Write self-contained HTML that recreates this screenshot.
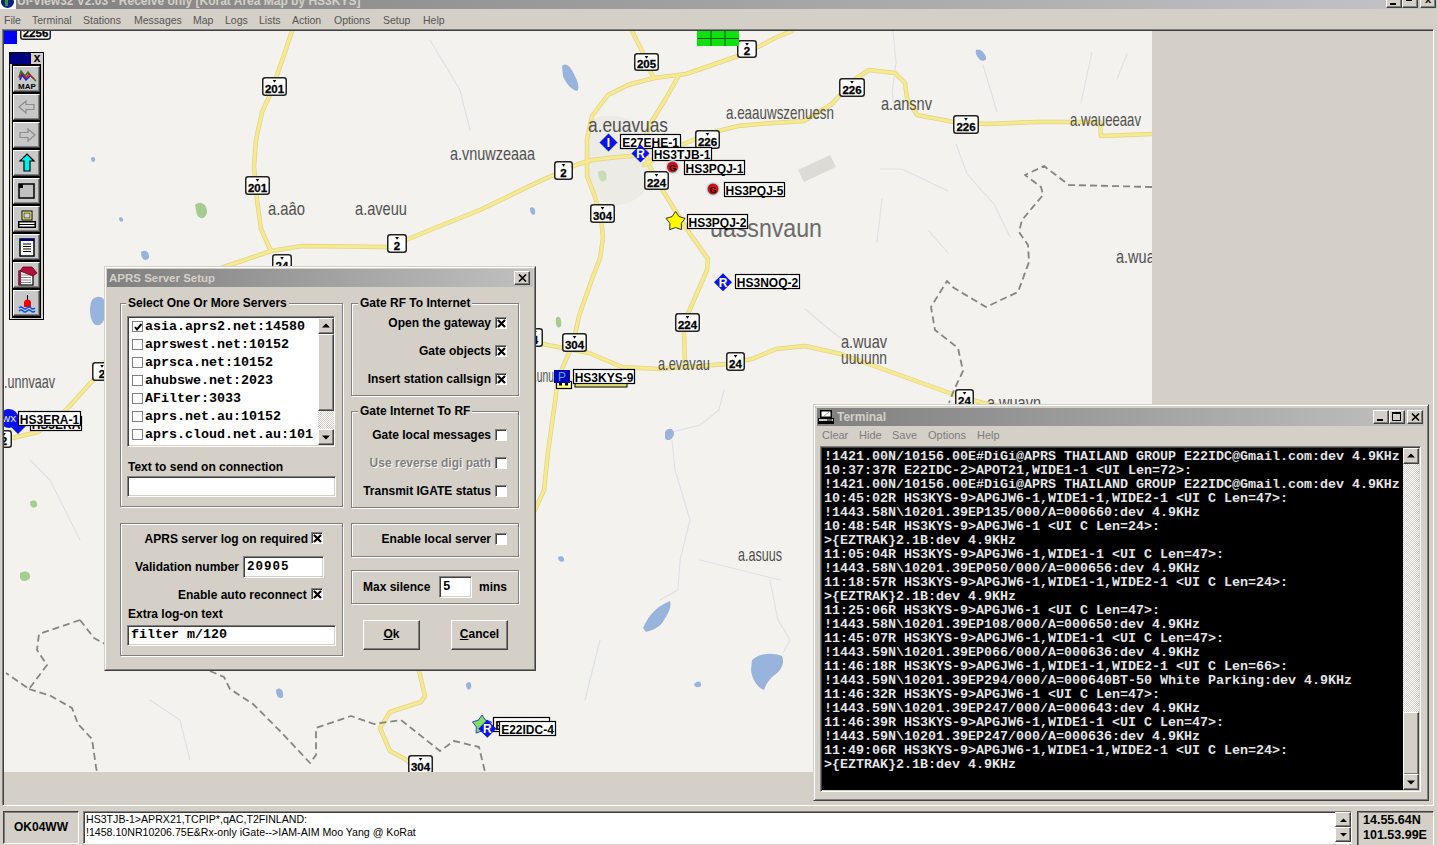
<!DOCTYPE html>
<html><head><meta charset="utf-8">
<style>
*{margin:0;padding:0;box-sizing:border-box}
html,body{width:1437px;height:845px;overflow:hidden}
body{background:#d4d0c8;font-family:"Liberation Sans",sans-serif;position:relative;color:#000}
.a{position:absolute}
.raised{border-top:1px solid #d4d0c8;border-left:1px solid #d4d0c8;border-right:1px solid #404040;border-bottom:1px solid #404040}
.raised>.in{position:absolute;left:0;top:0;right:0;bottom:0;border-top:1px solid #fff;border-left:1px solid #fff;border-right:1px solid #808080;border-bottom:1px solid #808080}
.btn{position:absolute;background:#d4d0c8;border-top:1px solid #fff;border-left:1px solid #fff;border-right:1px solid #404040;border-bottom:1px solid #404040;box-shadow:inset -1px -1px 0 #808080}
.sunk{position:absolute;background:#fff;border-top:1px solid #808080;border-left:1px solid #808080;border-right:1px solid #fff;border-bottom:1px solid #fff;box-shadow:inset 1px 1px 0 #404040, inset -1px -1px 0 #d4d0c8}
.grp{position:absolute;border:1px solid #808080;box-shadow:inset 1px 1px 0 #fff,1px 1px 0 #fff}
.gl{position:absolute;background:#d4d0c8;font:bold 12px "Liberation Sans",sans-serif;padding:0 2px;line-height:14px;white-space:nowrap}
.lbl{position:absolute;font:bold 12px "Liberation Sans",sans-serif;line-height:14px;white-space:nowrap}
.cb{position:absolute;width:12px;height:12px;background:#fff;border-top:1px solid #808080;border-left:1px solid #808080;border-right:1px solid #fff;border-bottom:1px solid #fff;box-shadow:inset 1px 1px 0 #404040}
.mono{font-family:"Liberation Mono",monospace;font-weight:bold;font-size:13.33px}
.menu span{position:absolute;top:13px;font-size:10.5px;color:#555;line-height:14px}
</style></head><body>

<!-- Title bar -->
<div class="a" style="left:0;top:-9px;width:1437px;height:18px;background:linear-gradient(to right,#808080,#c4c4c8)"></div>
<div class="a" style="left:0;top:0;width:16px;height:9px;background:#fff"></div>
<div class="a" style="left:1px;top:-4px;width:13px;height:12px;border-radius:50%;background:#102080"></div>
<div class="a" style="left:5px;top:0;width:3px;height:6px;background:#20a040"></div>
<div class="a" style="left:17px;top:-6px;height:18px;line-height:18px;font:bold 12px 'Liberation Sans',sans-serif;color:#d4d0c8;white-space:nowrap">UI-View32 V2.03 - Receive only [Korat Area Map by HS3KYS]</div>
<div class="btn" style="left:1386px;top:-7px;width:16px;height:15px"><div class="a" style="left:3px;top:9px;width:6px;height:2px;background:#000"></div></div>
<div class="btn" style="left:1402px;top:-7px;width:16px;height:15px"><div class="a" style="left:5px;top:-1px;width:6px;height:5px;border:1px solid #000;border-top-width:2px"></div><div class="a" style="left:3px;top:2px;width:6px;height:5px;background:#d4d0c8;border:1px solid #000;border-top-width:2px"></div></div>
<div class="btn" style="left:1420px;top:-7px;width:16px;height:15px;font:bold 11px 'Liberation Sans';line-height:11px;text-align:center">x</div>

<!-- Menu bar -->
<div class="menu">
<span style="left:4px">File</span>
<span style="left:32px">Terminal</span>
<span style="left:83px">Stations</span>
<span style="left:134px">Messages</span>
<span style="left:193px">Map</span>
<span style="left:225px">Logs</span>
<span style="left:259px">Lists</span>
<span style="left:292px">Action</span>
<span style="left:334px">Options</span>
<span style="left:383px">Setup</span>
<span style="left:423px">Help</span>
</div>

<!-- Main panel -->
<div class="a" style="left:2px;top:29px;width:1432px;height:777px;border-top:1px solid #808080;border-left:1px solid #808080;border-right:1px solid #fff;border-bottom:1px solid #fff">
 <div class="a" style="left:0;top:0;width:1430px;height:775px;border-top:1px solid #404040;border-left:1px solid #404040"></div>
</div>

<!-- MAP -->
<div id="map" class="a" style="left:4px;top:31px;width:1148px;height:741px;background:#f3f2ee;overflow:hidden">
<svg width="1148" height="741" viewBox="4 31 1148 741" style="position:absolute;left:0;top:0">
<!--MAPCONTENT-->
<g fill="none" stroke="#dde1e8" stroke-width="1.1" stroke-linecap="round">
<polyline points="724,390 719,410 700,425 672,432"/>
<polyline points="672,440 675,470 690,520 680,560 678,590 660,600"/>
<polyline points="770,580 778,620 790,640 783,653"/>
<polyline points="600,640 590,680 585,700"/>
<polyline points="700,560 760,575 780,580"/>
<polyline points="893,31 896,63 892,93 895,112"/>
<polyline points="983,65 997,112"/>
<polyline points="956,144 967,174 994,204 1010,237"/>
<polyline points="1092,52 1081,103"/>
<polyline points="1127,54 1117,79"/>
<polyline points="880,169 902,169 948,191"/>
<polyline points="882,199 877,242"/>
<polyline points="929,231 948,253"/>
<polyline points="805,309 830,330 850,345"/>
<polyline points="210,320 250,330 280,345"/>
<polyline points="30,460 50,480 70,520 80,540"/>
<polyline points="150,700 180,720 190,760"/>
<polyline points="430,40 460,90 470,130"/>
</g>
<path d="M798 170 L830 155 L836 167 L804 182 Z" fill="#dcdbd5"/>
<path d="M590 120 C610 110 640 118 650 140 C660 170 650 200 620 205 C595 208 585 180 588 150 Z" fill="#ecebe6"/>
<path d="M598 172 C604 168 608 172 606 180 C602 184 598 180 598 172 Z" fill="#c8dcb8"/>
<g fill="none" stroke-linejoin="round" stroke-linecap="round">
<polyline points="292,31 284,55 270,95 262,112 256,140 254,166 257,200 261,229 271,251" stroke="#e2d48a" stroke-width="4.5"/>
<polyline points="215,270 271,251 302,246 387,247 406,240 430,230 480,210 540,181 556,174 576,165 592,160 618,157 644,155" stroke="#e2d48a" stroke-width="4.5"/>
<polyline points="601,217 595,197 587,176 587,139 592,116 608,95 628,85 654,78 686,74 738,56 760,46 775,38 792,31" stroke="#e2d48a" stroke-width="4.5"/>
<polyline points="632,31 643,53 649,69 654,78" stroke="#e2d48a" stroke-width="4.5"/>
<polyline points="678,77 665,100 649,126 644,145 649,165 660,186 673,207 686,228 708,259 707,270 687,316 684,332 685,365" stroke="#e2d48a" stroke-width="4.5"/>
<polyline points="644,165 670,150 707,134 738,126 760,124 804,121 832,104 852,81 869,70 895,73 905,83 907,98 917,115 954,122 986,124 1037,122 1100,122 1101,136 1152,134" stroke="#e2d48a" stroke-width="4.5"/>
<polyline points="601,217 603,238 600,258 592,279 579,316 573,344 565,362 558,378 555,402 548,452 544,490 535,510" stroke="#e2d48a" stroke-width="4.5"/>
<polyline points="535,342 542,344 589,353 622,367 659,369 727,364 752,359 776,349 805,346 841,354 955,395 983,403 1000,406" stroke="#e2d48a" stroke-width="4.5"/>
<polyline points="105,362 95,378 66,410 38,432 12,438 4,440" stroke="#e2d48a" stroke-width="4.5"/>
<polyline points="419,671 425,696 421,702 390,712 380,728 390,751 405,759 420,772" stroke="#e2d48a" stroke-width="4.5"/>
<polyline points="292,31 284,55 270,95 262,112 256,140 254,166 257,200 261,229 271,251" stroke="#f6e98e" stroke-width="3"/>
<polyline points="215,270 271,251 302,246 387,247 406,240 430,230 480,210 540,181 556,174 576,165 592,160 618,157 644,155" stroke="#f6e98e" stroke-width="3"/>
<polyline points="601,217 595,197 587,176 587,139 592,116 608,95 628,85 654,78 686,74 738,56 760,46 775,38 792,31" stroke="#f6e98e" stroke-width="3"/>
<polyline points="632,31 643,53 649,69 654,78" stroke="#f6e98e" stroke-width="3"/>
<polyline points="678,77 665,100 649,126 644,145 649,165 660,186 673,207 686,228 708,259 707,270 687,316 684,332 685,365" stroke="#f6e98e" stroke-width="3"/>
<polyline points="644,165 670,150 707,134 738,126 760,124 804,121 832,104 852,81 869,70 895,73 905,83 907,98 917,115 954,122 986,124 1037,122 1100,122 1101,136 1152,134" stroke="#f6e98e" stroke-width="3"/>
<polyline points="601,217 603,238 600,258 592,279 579,316 573,344 565,362 558,378 555,402 548,452 544,490 535,510" stroke="#f6e98e" stroke-width="3"/>
<polyline points="535,342 542,344 589,353 622,367 659,369 727,364 752,359 776,349 805,346 841,354 955,395 983,403 1000,406" stroke="#f6e98e" stroke-width="3"/>
<polyline points="105,362 95,378 66,410 38,432 12,438 4,440" stroke="#f6e98e" stroke-width="3"/>
<polyline points="419,671 425,696 421,702 390,712 380,728 390,751 405,759 420,772" stroke="#f6e98e" stroke-width="3"/>
<polyline points="1152,187 1069,185 1044,166 1025,175 1041,187 1043,195 1022,220 1019,232 1028,245 1029,262 1018,292 986,307 954,288 947,281 931,307 935,330 958,348 963,371 954,390 949,403" stroke="#858585" stroke-width="1.8" stroke-dasharray="7,4" stroke-linecap="butt"/>
<polyline points="80,620 39,634 37,650 47,665 29,689 6,673" stroke="#858585" stroke-width="1.8" stroke-dasharray="7,4" stroke-linecap="butt"/>
<polyline points="80,620 94,638 105,644" stroke="#858585" stroke-width="1.8" stroke-dasharray="7,4" stroke-linecap="butt"/>
<polyline points="29,689 51,696 72,708 78,724 92,739 96,767 97,772" stroke="#858585" stroke-width="1.8" stroke-dasharray="7,4" stroke-linecap="butt"/>
<polyline points="210,671 224,677 230,689 253,704 281,732 310,763 316,755 316,728 351,716 374,724 401,720 440,751 454,741 479,747 485,772" stroke="#858585" stroke-width="1.8" stroke-dasharray="7,4" stroke-linecap="butt"/>
</g>
<path d="M562 66 C566 62 570 66 574 74 C578 82 580 88 577 91 C572 90 566 84 563 76 Z" fill="#98b4dc"/>
<path d="M976 50 C980 48 984 52 986 57 C987 60 983 62 980 60 C977 57 975 53 976 50 Z" fill="#98b4dc"/>
<path d="M643 628 C650 612 660 605 670 601 C672 606 668 614 664 620 C660 628 652 630 646 632 Z" fill="#98b4dc"/>
<path d="M752 660 C760 653 772 652 782 656 C785 663 781 670 776 674 C770 678 766 684 764 690 C758 688 752 680 751 670 Z" fill="#98b4dc"/>
<path d="M694 684 C698 680 702 681 701 686 C698 688 695 688 694 684 Z" fill="#98b4dc"/>
<path d="M665 432 C668 427 674 428 674 434 C673 440 667 442 665 438 Z" fill="#98b4dc"/>
<path d="M92 300 C98 294 106 296 106 308 C106 322 100 328 94 324 C89 318 89 306 92 300 Z" fill="#98b4dc"/>
<path d="M141 252 C145 249 150 252 149 258 C146 262 141 260 141 252 Z" fill="#98b4dc"/>
<path d="M119 218 C121 216 124 218 123 221 C121 223 119 221 119 218 Z" fill="#98b4dc"/>
<path d="M530 208 C533 206 536 209 535 214 C532 216 530 213 530 208 Z" fill="#98b4dc"/>
<path d="M276 690 C280 686 284 690 283 697 C280 700 276 697 276 690 Z" fill="#98b4dc"/>
<path d="M466 684 C469 680 472 682 471 688 C469 691 466 690 466 684 Z" fill="#98b4dc"/>
<path d="M91 158 C93 156 96 157 95 161 C93 163 91 162 91 158 Z" fill="#98b4dc"/>
<path d="M558 557 C561 555 565 557 564 561 C561 563 558 561 558 557 Z" fill="#98b4dc"/>
<path d="M195 205 C200 200 207 204 207 212 C206 219 200 220 197 215 Z" fill="#a8cc90"/>
<path d="M20 573 C25 570 31 571 30 578 C27 582 21 582 20 578 Z" fill="#a8cc90"/>
<path d="M30 502 C34 499 38 501 37 506 C34 509 30 508 30 502 Z" fill="#a8cc90"/>
<path d="M556 318 C559 315 562 318 561 326 C558 330 555 326 556 318 Z" fill="#a8cc90"/>
<rect x="262.75" y="77.75" width="23.5" height="17.5" rx="2.5" fill="#fff" stroke="#222" stroke-width="1.5"/>
<path d="M272.7 80H276.3L274.5 82.8Z" fill="#000"/>
<text x="274.5" y="93.2" font-family="Liberation Sans" font-weight="bold" font-size="11.5" text-anchor="middle" fill="#000" stroke="#000" stroke-width="0.3">201</text>
<rect x="245.75" y="176.75" width="23.5" height="17.5" rx="2.5" fill="#fff" stroke="#222" stroke-width="1.5"/>
<path d="M255.7 179H259.3L257.5 181.8Z" fill="#000"/>
<text x="257.5" y="192.2" font-family="Liberation Sans" font-weight="bold" font-size="11.5" text-anchor="middle" fill="#000" stroke="#000" stroke-width="0.3">201</text>
<rect x="387.75" y="234.75" width="18.5" height="17.5" rx="2.5" fill="#fff" stroke="#222" stroke-width="1.5"/>
<path d="M395.2 237H398.8L397.0 239.8Z" fill="#000"/>
<text x="397.0" y="250.2" font-family="Liberation Sans" font-weight="bold" font-size="11.5" text-anchor="middle" fill="#000" stroke="#000" stroke-width="0.3">2</text>
<rect x="272.75" y="254.75" width="18.5" height="17.5" rx="2.5" fill="#fff" stroke="#222" stroke-width="1.5"/>
<path d="M280.2 257H283.8L282.0 259.8Z" fill="#000"/>
<text x="282.0" y="270.2" font-family="Liberation Sans" font-weight="bold" font-size="11.5" text-anchor="middle" fill="#000" stroke="#000" stroke-width="0.3">24</text>
<rect x="634.75" y="53.75" width="23.5" height="16.5" rx="2.5" fill="#fff" stroke="#222" stroke-width="1.5"/>
<path d="M644.7 56H648.3L646.5 58.8Z" fill="#000"/>
<text x="646.5" y="68.2" font-family="Liberation Sans" font-weight="bold" font-size="11.5" text-anchor="middle" fill="#000" stroke="#000" stroke-width="0.3">205</text>
<rect x="737.75" y="40.75" width="18.5" height="16.5" rx="2.5" fill="#fff" stroke="#222" stroke-width="1.5"/>
<path d="M745.2 43H748.8L747.0 45.8Z" fill="#000"/>
<text x="747.0" y="55.2" font-family="Liberation Sans" font-weight="bold" font-size="11.5" text-anchor="middle" fill="#000" stroke="#000" stroke-width="0.3">2</text>
<rect x="839.75" y="78.75" width="24.5" height="17.5" rx="2.5" fill="#fff" stroke="#222" stroke-width="1.5"/>
<path d="M850.2 81H853.8L852.0 83.8Z" fill="#000"/>
<text x="852.0" y="94.2" font-family="Liberation Sans" font-weight="bold" font-size="11.5" text-anchor="middle" fill="#000" stroke="#000" stroke-width="0.3">226</text>
<rect x="695.75" y="130.75" width="23.5" height="17.5" rx="2.5" fill="#fff" stroke="#222" stroke-width="1.5"/>
<path d="M705.7 133H709.3L707.5 135.8Z" fill="#000"/>
<text x="707.5" y="146.2" font-family="Liberation Sans" font-weight="bold" font-size="11.5" text-anchor="middle" fill="#000" stroke="#000" stroke-width="0.3">226</text>
<rect x="554.75" y="161.75" width="17.5" height="17.5" rx="2.5" fill="#fff" stroke="#222" stroke-width="1.5"/>
<path d="M561.7 164H565.3L563.5 166.8Z" fill="#000"/>
<text x="563.5" y="177.2" font-family="Liberation Sans" font-weight="bold" font-size="11.5" text-anchor="middle" fill="#000" stroke="#000" stroke-width="0.3">2</text>
<rect x="644.75" y="171.75" width="23.5" height="17.5" rx="2.5" fill="#fff" stroke="#222" stroke-width="1.5"/>
<path d="M654.7 174H658.3L656.5 176.8Z" fill="#000"/>
<text x="656.5" y="187.2" font-family="Liberation Sans" font-weight="bold" font-size="11.5" text-anchor="middle" fill="#000" stroke="#000" stroke-width="0.3">224</text>
<rect x="590.75" y="204.75" width="23.5" height="17.5" rx="2.5" fill="#fff" stroke="#222" stroke-width="1.5"/>
<path d="M600.7 207H604.3L602.5 209.8Z" fill="#000"/>
<text x="602.5" y="220.2" font-family="Liberation Sans" font-weight="bold" font-size="11.5" text-anchor="middle" fill="#000" stroke="#000" stroke-width="0.3">304</text>
<rect x="953.75" y="115.75" width="24.5" height="17.5" rx="2.5" fill="#fff" stroke="#222" stroke-width="1.5"/>
<path d="M964.2 118H967.8L966.0 120.8Z" fill="#000"/>
<text x="966.0" y="131.2" font-family="Liberation Sans" font-weight="bold" font-size="11.5" text-anchor="middle" fill="#000" stroke="#000" stroke-width="0.3">226</text>
<rect x="562.75" y="333.75" width="23.5" height="17.5" rx="2.5" fill="#fff" stroke="#222" stroke-width="1.5"/>
<path d="M572.7 336H576.3L574.5 338.8Z" fill="#000"/>
<text x="574.5" y="349.2" font-family="Liberation Sans" font-weight="bold" font-size="11.5" text-anchor="middle" fill="#000" stroke="#000" stroke-width="0.3">304</text>
<rect x="675.75" y="313.75" width="23.5" height="17.5" rx="2.5" fill="#fff" stroke="#222" stroke-width="1.5"/>
<path d="M685.7 316H689.3L687.5 318.8Z" fill="#000"/>
<text x="687.5" y="329.2" font-family="Liberation Sans" font-weight="bold" font-size="11.5" text-anchor="middle" fill="#000" stroke="#000" stroke-width="0.3">224</text>
<rect x="726.75" y="352.75" width="17.5" height="17.5" rx="2.5" fill="#fff" stroke="#222" stroke-width="1.5"/>
<path d="M733.7 355H737.3L735.5 357.8Z" fill="#000"/>
<text x="735.5" y="368.2" font-family="Liberation Sans" font-weight="bold" font-size="11.5" text-anchor="middle" fill="#000" stroke="#000" stroke-width="0.3">24</text>
<rect x="527.75" y="328.75" width="14.5" height="17.5" rx="2.5" fill="#fff" stroke="#222" stroke-width="1.5"/>
<path d="M533.2 331H536.8L535.0 333.8Z" fill="#000"/>
<text x="535.0" y="344.2" font-family="Liberation Sans" font-weight="bold" font-size="11.5" text-anchor="middle" fill="#000" stroke="#000" stroke-width="0.3">4</text>
<rect x="955.75" y="389.75" width="17.5" height="17.5" rx="2.5" fill="#fff" stroke="#222" stroke-width="1.5"/>
<path d="M962.7 392H966.3L964.5 394.8Z" fill="#000"/>
<text x="964.5" y="405.2" font-family="Liberation Sans" font-weight="bold" font-size="11.5" text-anchor="middle" fill="#000" stroke="#000" stroke-width="0.3">24</text>
<rect x="92.75" y="362.75" width="18.5" height="17.5" rx="2.5" fill="#fff" stroke="#222" stroke-width="1.5"/>
<path d="M100.2 365H103.8L102.0 367.8Z" fill="#000"/>
<text x="102.0" y="378.2" font-family="Liberation Sans" font-weight="bold" font-size="11.5" text-anchor="middle" fill="#000" stroke="#000" stroke-width="0.3">2</text>
<rect x="-3.25" y="430.75" width="14.5" height="16.5" rx="2.5" fill="#fff" stroke="#222" stroke-width="1.5"/>
<path d="M2.2 433H5.8L4.0 435.8Z" fill="#000"/>
<text x="4.0" y="445.2" font-family="Liberation Sans" font-weight="bold" font-size="11.5" text-anchor="middle" fill="#000" stroke="#000" stroke-width="0.3">2</text>
<rect x="408.75" y="755.75" width="23.5" height="17.5" rx="2.5" fill="#fff" stroke="#222" stroke-width="1.5"/>
<path d="M418.7 758H422.3L420.5 760.8Z" fill="#000"/>
<text x="420.5" y="771.2" font-family="Liberation Sans" font-weight="bold" font-size="11.5" text-anchor="middle" fill="#000" stroke="#000" stroke-width="0.3">304</text>
<rect x="20.75" y="23.75" width="29.5" height="15.5" rx="2.5" fill="#fff" stroke="#222" stroke-width="1.5"/>
<path d="M33.7 26H37.3L35.5 28.8Z" fill="#000"/>
<text x="35.5" y="37.2" font-family="Liberation Sans" font-weight="bold" font-size="11.5" text-anchor="middle" fill="#000" stroke="#000" stroke-width="0.3">2256</text>
<text x="450" y="159.7" font-family="Liberation Sans" font-size="17.9" fill="#505050" textLength="85" lengthAdjust="spacingAndGlyphs">a.vnuwzeaaa</text>
<text x="268" y="214.7" font-family="Liberation Sans" font-size="17.9" fill="#505050" textLength="37" lengthAdjust="spacingAndGlyphs">a.aâo</text>
<text x="355" y="214.7" font-family="Liberation Sans" font-size="17.9" fill="#505050" textLength="52" lengthAdjust="spacingAndGlyphs">a.aveuu</text>
<text x="588" y="132.4" font-family="Liberation Sans" font-size="20.7" fill="#505050" textLength="80" lengthAdjust="spacingAndGlyphs">a.euavuas</text>
<text x="726" y="118.7" font-family="Liberation Sans" font-size="17.9" fill="#505050" textLength="108" lengthAdjust="spacingAndGlyphs">a.eaauwszenuesn</text>
<text x="881" y="109.7" font-family="Liberation Sans" font-size="17.9" fill="#505050" textLength="51" lengthAdjust="spacingAndGlyphs">a.ansnv</text>
<text x="1070" y="125.7" font-family="Liberation Sans" font-size="17.9" fill="#505050" textLength="71" lengthAdjust="spacingAndGlyphs">a.waueeaav</text>
<text x="1116" y="262.7" font-family="Liberation Sans" font-size="17.9" fill="#505050" textLength="46" lengthAdjust="spacingAndGlyphs">a.wuav</text>
<text x="710" y="236.8" font-family="Liberation Sans" font-size="26.2" fill="#6a6a6a" textLength="112" lengthAdjust="spacingAndGlyphs">uassnvaun</text>
<text x="841" y="347.7" font-family="Liberation Sans" font-size="17.9" fill="#505050" textLength="46" lengthAdjust="spacingAndGlyphs">a.wuav</text>
<text x="841" y="363.7" font-family="Liberation Sans" font-size="17.9" fill="#505050" textLength="46" lengthAdjust="spacingAndGlyphs">uuuunn</text>
<text x="658" y="369.7" font-family="Liberation Sans" font-size="17.9" fill="#505050" textLength="52" lengthAdjust="spacingAndGlyphs">a.evavau</text>
<text x="738" y="560.7" font-family="Liberation Sans" font-size="17.9" fill="#505050" textLength="44" lengthAdjust="spacingAndGlyphs">a.asuus</text>
<text x="4" y="387.7" font-family="Liberation Sans" font-size="17.9" fill="#505050" textLength="51" lengthAdjust="spacingAndGlyphs">.unnvaav</text>
<text x="534" y="381.7" font-family="Liberation Sans" font-size="17.9" fill="#505050" textLength="20" lengthAdjust="spacingAndGlyphs">.unu</text>
<text x="987" y="408.7" font-family="Liberation Sans" font-size="17.9" fill="#505050" textLength="54" lengthAdjust="spacingAndGlyphs">a.wuavn</text>
<path d="M608.5 133.5L617.5 142.5L608.5 151.5L599.5 142.5Z" fill="#0a14e8"/>
<text x="608.5" y="147.0" font-family="Liberation Sans" font-weight="bold" font-size="12" text-anchor="middle" fill="#fff">I</text>
<rect x="620.5" y="134.5" width="60" height="14" fill="#fff" stroke="#000" stroke-width="1.2"/>
<text x="650.5" y="146.5" font-family="Liberation Sans" font-weight="bold" font-size="12" text-anchor="middle" fill="#000">E27EHE-1</text>
<path d="M640.5 144.6L649.5 153.6L640.5 162.6L631.5 153.6Z" fill="#0a14e8"/>
<text x="640.5" y="158.1" font-family="Liberation Sans" font-weight="bold" font-size="12" text-anchor="middle" fill="#fff">R</text>
<rect x="652.5" y="147.5" width="59" height="13" fill="#fff" stroke="#000" stroke-width="1.2"/>
<text x="682.0" y="158.5" font-family="Liberation Sans" font-weight="bold" font-size="12" text-anchor="middle" fill="#000">HS3TJB-1</text>
<circle cx="672.5" cy="167" r="7" fill="#bfe0e8"/>
<circle cx="672.5" cy="167" r="5.5" fill="#d01010"/>
<text x="672.5" y="170.5" font-family="Liberation Sans" font-weight="bold" font-size="9" text-anchor="middle" fill="#000">G</text>
<circle cx="713" cy="189" r="7" fill="#bfe0e8"/>
<circle cx="713" cy="189" r="5.5" fill="#d01010"/>
<text x="713" y="192.5" font-family="Liberation Sans" font-weight="bold" font-size="9" text-anchor="middle" fill="#000">G</text>
<rect x="684.5" y="160.5" width="60" height="14" fill="#fff" stroke="#000" stroke-width="1.2"/>
<text x="714.5" y="172.5" font-family="Liberation Sans" font-weight="bold" font-size="12" text-anchor="middle" fill="#000">HS3PQJ-1</text>
<rect x="724.5" y="182.5" width="60" height="14" fill="#fff" stroke="#000" stroke-width="1.2"/>
<text x="754.5" y="194.5" font-family="Liberation Sans" font-weight="bold" font-size="12" text-anchor="middle" fill="#000">HS3PQJ-5</text>
<polygon points="675.6,211.5 679.1,216.6 685.1,218.4 681.3,223.4 681.5,229.6 675.6,227.5 669.7,229.6 669.9,223.4 666.1,218.4 672.1,216.6" fill="#ffff00" stroke="#000" stroke-width="0.8"/>
<rect x="687.5" y="214.5" width="60" height="14" fill="#fff" stroke="#000" stroke-width="1.2"/>
<text x="717.5" y="226.5" font-family="Liberation Sans" font-weight="bold" font-size="12" text-anchor="middle" fill="#000">HS3PQJ-2</text>
<path d="M723 273.3L732 282.3L723 291.3L714 282.3Z" fill="#0a14e8"/>
<text x="723" y="286.8" font-family="Liberation Sans" font-weight="bold" font-size="12" text-anchor="middle" fill="#fff">R</text>
<rect x="735.5" y="274.5" width="64" height="14" fill="#fff" stroke="#000" stroke-width="1.2"/>
<text x="767.5" y="286.5" font-family="Liberation Sans" font-weight="bold" font-size="12" text-anchor="middle" fill="#000">HS3NOQ-2</text>
<rect x="575" y="382" width="52" height="5" fill="#e8e070" stroke="#000" stroke-width="1"/>
<rect x="573.5" y="369.5" width="61" height="14" fill="#fff" stroke="#000" stroke-width="1.2"/>
<text x="604.0" y="381.5" font-family="Liberation Sans" font-weight="bold" font-size="12" text-anchor="middle" fill="#000">HS3KYS-9</text>
<rect x="556.5" y="381.5" width="15" height="7" fill="#ffff80" stroke="#000" stroke-width="1.2"/>
<rect x="559" y="383" width="3" height="2.5" fill="#000"/><rect x="565" y="383" width="3" height="2.5" fill="#000"/>
<rect x="554" y="370" width="16" height="13" fill="#0000b8"/>
<text x="562" y="381" font-family="Liberation Sans" font-size="12" text-anchor="middle" fill="#40b0ff">P</text>
<rect x="30.5" y="416.5" width="51" height="14" fill="#fff" stroke="#000" stroke-width="1.2"/>
<text x="56.0" y="428.5" font-family="Liberation Sans" font-weight="bold" font-size="12" text-anchor="middle" fill="#000">HS3ERA</text>
<path d="M18 417L26.5 425.5L18 434L9.5 425.5Z" fill="#0a14e8"/>
<circle cx="9" cy="418.5" r="9.5" fill="#0a14e8"/>
<text x="9" y="422" font-family="Liberation Sans" font-size="9" text-anchor="middle" fill="#fff">WX</text>
<rect x="18.5" y="411.5" width="62" height="14" fill="#fff" stroke="#000" stroke-width="1.2"/>
<text x="49.5" y="423.5" font-family="Liberation Sans" font-weight="bold" font-size="12" text-anchor="middle" fill="#000">HS3ERA-1</text>
<rect x="493.5" y="717.5" width="56" height="14" fill="#fff" stroke="#000" stroke-width="1.2"/>
<text x="521.5" y="729.5" font-family="Liberation Sans" font-weight="bold" font-size="12" text-anchor="middle" fill="#000">E22IDC-4</text>
<polygon points="482.0,715.0 485.5,720.1 491.5,721.9 487.7,726.9 487.9,733.1 482.0,731.0 476.1,733.1 476.3,726.9 472.5,721.9 478.5,720.1" fill="#80e060" stroke="#0a14e8" stroke-width="0.8"/>
<path d="M487.3 719.7L496.3 728.7L487.3 737.7L478.3 728.7Z" fill="#0a14e8"/>
<text x="487.3" y="733.2" font-family="Liberation Sans" font-weight="bold" font-size="12" text-anchor="middle" fill="#fff">R</text>
<rect x="499.5" y="721.5" width="56" height="14" fill="#fff" stroke="#000" stroke-width="1.2"/>
<text x="527.5" y="733.5" font-family="Liberation Sans" font-weight="bold" font-size="12" text-anchor="middle" fill="#000">E22IDC-4</text>
<rect x="697" y="31" width="42" height="15" fill="#10e010"/>
<path d="M697 38.5H739M711 31V46M725 31V46" stroke="#0a600a" stroke-width="1"/>

</svg>
</div>

<!-- TOOLBAR -->
<div class="a" style="left:4px;top:31px;width:13px;height:13px;background:#0000f8"></div>
<div class="a" style="left:9px;top:52px;width:35px;height:268px;background:#d4d0c8;border:1px solid #000"></div>
<div class="a" style="left:10px;top:53px;width:21px;height:11px;background:#000080"></div>
<div class="a" style="left:31px;top:51px;width:12px;height:14px;font:bold 12px 'Liberation Sans',sans-serif;line-height:14px;text-align:center">x</div>
<div class="a" style="left:12px;top:64px;width:29px;height:254px;background:#000"></div>
<div class="a" style="left:0;top:0">
 <div class="btn" style="left:13px;top:66px;width:27px;height:26px;background:#c8c8c8"><svg class="a" style="left:2px;top:2px" width="22" height="21"><path d="M3 8L5 2L9 7L12 3L15 7L20 12" stroke="#208020" stroke-width="1.5" fill="none"/><path d="M3 9L6 4L10 9L13 5L18 10" stroke="#c02020" stroke-width="1.5" fill="none"/><path d="M4 11L6 6L10 11L14 7" stroke="#2020c0" stroke-width="1.5" fill="none"/><text x="11" y="20" font-family="Liberation Sans" font-weight="bold" font-size="8" text-anchor="middle">MAP</text></svg></div>
 <div class="btn" style="left:13px;top:94px;width:27px;height:26px;background:#c8c8c8"><svg class="a" style="left:3px;top:4px" width="20" height="16"><path d="M2 8L9 2V5.5H17V10.5H9V14Z" fill="none" stroke="#8c8c8c" stroke-width="1.2"/></svg></div>
 <div class="btn" style="left:13px;top:122px;width:27px;height:26px;background:#c8c8c8"><svg class="a" style="left:3px;top:4px" width="20" height="16"><path d="M18 8L11 2V5.5H3V10.5H11V14Z" fill="none" stroke="#8c8c8c" stroke-width="1.2"/></svg></div>
 <div class="btn" style="left:13px;top:150px;width:27px;height:26px;background:#c8c8c8"><svg class="a" style="left:4px;top:2px" width="18" height="20"><path d="M9 1L16 8H12V18H6V8H2Z" fill="#00f0f0" stroke="#000" stroke-width="1.2"/></svg></div>
 <div class="btn" style="left:13px;top:178px;width:27px;height:26px;background:#c8c8c8"><svg class="a" style="left:4px;top:4px" width="18" height="17"><rect x="1" y="1" width="15" height="14" fill="#c0c0c0" stroke="#000" stroke-width="1.5"/><rect x="1" y="1" width="4" height="4" fill="#000"/></svg></div>
 <div class="btn" style="left:13px;top:206px;width:27px;height:26px;background:#c8c8c8"><svg class="a" style="left:3px;top:3px" width="20" height="19"><rect x="5" y="1" width="10" height="9" fill="#ffff60" stroke="#000" stroke-width="1"/><rect x="7" y="3" width="6" height="5" fill="#d0d0e0" stroke="#000" stroke-width="0.6"/><rect x="1" y="11" width="18" height="7" fill="#000"/><rect x="2.5" y="12.5" width="15" height="1.5" fill="#fff"/><rect x="2.5" y="15" width="15" height="1.5" fill="#fff"/></svg></div>
 <div class="btn" style="left:13px;top:234px;width:27px;height:26px;background:#c8c8c8"><svg class="a" style="left:5px;top:3px" width="17" height="19"><rect x="1" y="1" width="14" height="17" fill="#fff" stroke="#000" stroke-width="1.5"/><rect x="1" y="1" width="14" height="2" fill="#000080"/><path d="M4 6H12M4 8.5H12M4 11H12M4 13.5H12" stroke="#000" stroke-width="1"/></svg></div>
 <div class="btn" style="left:13px;top:262px;width:27px;height:26px;background:#c8c8c8"><svg class="a" style="left:3px;top:3px" width="21" height="20"><rect x="2" y="5" width="14" height="14" fill="#fff" stroke="#000" stroke-width="1.2"/><path d="M4 9H14M4 11.5H14M4 14H14M4 16.5H14" stroke="#888" stroke-width="1"/><path d="M3 5L6 1H15L20 7L16 10Z" fill="#b01040" stroke="#600" stroke-width="0.8"/><rect x="2" y="5" width="2" height="14" fill="#b01040"/></svg></div>
 <div class="btn" style="left:13px;top:290px;width:27px;height:26px;background:#c8c8c8"><svg class="a" style="left:3px;top:2px" width="21" height="21"><path d="M10.5 2V7" stroke="#000" stroke-width="1"/><circle cx="10.5" cy="10" r="3.5" fill="#f00000"/><rect x="7" y="10" width="7" height="4" fill="#f00000"/><path d="M2 15Q4 13 6 15T10 15T14 15T18 15M2 18Q4 16 6 18T10 18T14 18T18 18" stroke="#0050f0" stroke-width="1.3" fill="none"/></svg></div>
</div>


<!-- DIALOG -->
<div class="a raised" style="left:104px;top:266px;width:432px;height:405px;background:#d4d0c8"><div class="in"></div></div>
<div class="a" style="left:107px;top:269px;width:426px;height:18px;background:linear-gradient(to right,#808080,#c0c0c0)"></div>
<div class="a" style="left:109px;top:271px;font:bold 11.5px 'Liberation Sans',sans-serif;line-height:14px;color:#d4d0c8;white-space:nowrap">APRS Server Setup</div>
<div class="btn" style="left:514px;top:271px;width:16px;height:14px"><svg class="a" style="left:3px;top:2px" width="9" height="8"><path d="M1 0.5L8 7.5M8 0.5L1 7.5" stroke="#000" stroke-width="1.6"/></svg></div>

<div class="grp" style="left:120px;top:303px;width:223px;height:204px"></div>
<div class="gl" style="left:126px;top:296px">Select One Or More Servers</div>
<div class="sunk" style="left:127px;top:316px;width:208px;height:131px"></div>
<div class="a mono" style="left:145px;top:318px;width:173px;height:128px;overflow:hidden;line-height:18px;white-space:pre">asia.aprs2.net:14580
aprswest.net:10152
aprsca.net:10152
ahubswe.net:2023
AFilter:3033
aprs.net.au:10152
aprs.cloud.net.au:101</div>
<div class="a" style="left:132px;top:321px;width:11px;height:126px">
 <div class="a" style="left:0;top:0;width:11px;height:11px;border:1px solid #808080"><svg class="a" style="left:1px;top:1px" width="8" height="8"><path d="M1 4L3 6.5L7.5 1" stroke="#000" stroke-width="2" fill="none"/></svg></div>
 <div class="a" style="left:0;top:18px;width:11px;height:11px;border:1px solid #808080"></div>
 <div class="a" style="left:0;top:36px;width:11px;height:11px;border:1px solid #808080"></div>
 <div class="a" style="left:0;top:54px;width:11px;height:11px;border:1px solid #808080"></div>
 <div class="a" style="left:0;top:72px;width:11px;height:11px;border:1px solid #808080"></div>
 <div class="a" style="left:0;top:90px;width:11px;height:11px;border:1px solid #808080"></div>
 <div class="a" style="left:0;top:108px;width:11px;height:11px;border:1px solid #808080"></div>
</div>
<div class="a" style="left:318px;top:318px;width:16px;height:127px;background:repeating-conic-gradient(#fff 0 25%,#d4d0c8 0 50%) 0 0/2px 2px"></div>
<div class="btn" style="left:318px;top:318px;width:16px;height:16px"><svg class="a" style="left:3px;top:4px" width="8" height="5"><path d="M0 4.5L4 0.5L8 4.5Z" fill="#000"/></svg></div>
<div class="btn" style="left:318px;top:334px;width:16px;height:77px"></div>
<div class="btn" style="left:318px;top:429px;width:16px;height:16px"><svg class="a" style="left:3px;top:5px" width="8" height="5"><path d="M0 0.5L4 4.5L8 0.5Z" fill="#000"/></svg></div>
<div class="a" style="left:128px;top:460px;font:bold 12px 'Liberation Sans',sans-serif;line-height:14px;white-space:nowrap">Text to send on connection</div>
<div class="sunk" style="left:127px;top:476px;width:209px;height:21px"></div>

<div class="grp" style="left:120px;top:523px;width:223px;height:133px"></div>
<div class="lbl" style="left:0;width:308px;text-align:right;top:532px">APRS server log on required</div>
<div class="cb" style="left:311px;top:532px"><svg class="a" style="left:1px;top:1px" width="9" height="9"><path d="M1 1L8 8M8 1L1 8" stroke="#000" stroke-width="2.2"/></svg></div>
<div class="lbl" style="left:135px;top:560px">Validation number</div>
<div class="sunk" style="left:243px;top:556px;width:81px;height:22px"></div>
<div class="a mono" style="left:247px;top:558px;line-height:18px;font-size:12.5px;letter-spacing:1px">20905</div>
<div class="lbl" style="left:178px;top:588px">Enable auto reconnect</div>
<div class="cb" style="left:311px;top:588px"><svg class="a" style="left:1px;top:1px" width="9" height="9"><path d="M1 1L8 8M8 1L1 8" stroke="#000" stroke-width="2.2"/></svg></div>
<div class="lbl" style="left:128px;top:607px">Extra log-on text</div>
<div class="sunk" style="left:127px;top:625px;width:209px;height:21px"></div>
<div class="a mono" style="left:131px;top:626px;line-height:18px">filter m/120</div>

<div class="grp" style="left:351px;top:303px;width:168px;height:93px"></div>
<div class="gl" style="left:358px;top:296px">Gate RF To Internet</div>
<div class="lbl" style="left:0;width:491px;text-align:right;top:316px">Open the gateway</div>
<div class="cb" style="left:495px;top:317px"><svg class="a" style="left:1px;top:1px" width="9" height="9"><path d="M1 1L8 8M8 1L1 8" stroke="#000" stroke-width="2.2"/></svg></div>
<div class="lbl" style="left:0;width:491px;text-align:right;top:344px">Gate objects</div>
<div class="cb" style="left:495px;top:345px"><svg class="a" style="left:1px;top:1px" width="9" height="9"><path d="M1 1L8 8M8 1L1 8" stroke="#000" stroke-width="2.2"/></svg></div>
<div class="lbl" style="left:0;width:491px;text-align:right;top:372px">Insert station callsign</div>
<div class="cb" style="left:495px;top:373px"><svg class="a" style="left:1px;top:1px" width="9" height="9"><path d="M1 1L8 8M8 1L1 8" stroke="#000" stroke-width="2.2"/></svg></div>

<div class="grp" style="left:351px;top:411px;width:168px;height:97px"></div>
<div class="gl" style="left:358px;top:404px">Gate Internet To RF</div>
<div class="lbl" style="left:0;width:491px;text-align:right;top:428px">Gate local messages</div>
<div class="cb" style="left:495px;top:429px"></div>
<div class="lbl" style="left:0;width:491px;text-align:right;top:456px;color:#808080;text-shadow:1px 1px 0 #fff">Use reverse digi path</div>
<div class="cb" style="left:495px;top:457px"></div>
<div class="lbl" style="left:0;width:491px;text-align:right;top:484px">Transmit IGATE status</div>
<div class="cb" style="left:495px;top:485px"></div>

<div class="grp" style="left:351px;top:523px;width:168px;height:34px"></div>
<div class="lbl" style="left:0;width:491px;text-align:right;top:532px">Enable local server</div>
<div class="cb" style="left:495px;top:533px"></div>

<div class="grp" style="left:351px;top:570px;width:168px;height:34px"></div>
<div class="lbl" style="left:363px;top:580px">Max silence</div>
<div class="sunk" style="left:439px;top:576px;width:33px;height:22px"></div>
<div class="a mono" style="left:443px;top:578px;line-height:18px;font-size:12.5px">5</div>
<div class="lbl" style="left:479px;top:580px">mins</div>

<div class="btn" style="left:363px;top:620px;width:57px;height:30px"></div>
<div class="lbl" style="left:363px;width:57px;text-align:center;top:627px"><u>O</u>k</div>
<div class="btn" style="left:451px;top:620px;width:57px;height:30px"></div>
<div class="lbl" style="left:451px;width:57px;text-align:center;top:627px"><u>C</u>ancel</div>


<!-- TERMINAL -->
<div class="a" style="left:813px;top:404px;width:616px;height:397px;background:#d4d0c8;border-top:1px solid #d4d0c8;border-left:1px solid #d4d0c8;border-right:1px solid #404040;border-bottom:1px solid #404040;box-shadow:inset 1px 1px 0 #fff,inset -1px -1px 0 #808080"></div>
<div class="a" style="left:817px;top:408px;width:607px;height:18px;background:linear-gradient(to right,#808080,#c0c0c0)"></div>
<svg class="a" style="left:818px;top:410px" width="17" height="14"><rect x="2" y="0" width="12" height="8" fill="#000"/><rect x="3.5" y="1.5" width="9" height="5" fill="#fff"/><path d="M6 6L11 2" stroke="#999" stroke-width="1"/><rect x="0" y="8" width="16" height="6" fill="#000"/><rect x="1" y="9" width="14" height="2" fill="#c8c8c8"/><rect x="9" y="9.5" width="5" height="1" fill="#000"/></svg>
<div class="a" style="left:837px;top:410px;font:bold 12px 'Liberation Sans',sans-serif;line-height:14px;color:#d4d0c8;white-space:nowrap">Terminal</div>
<div class="btn" style="left:1373px;top:410px;width:16px;height:14px"><div class="a" style="left:3px;top:8px;width:6px;height:2px;background:#000"></div></div>
<div class="btn" style="left:1389px;top:410px;width:16px;height:14px"><div class="a" style="left:2px;top:1px;width:9px;height:9px;border:1px solid #000;border-top-width:2px"></div></div>
<div class="btn" style="left:1407px;top:410px;width:16px;height:14px"><svg class="a" style="left:3px;top:2px" width="9" height="8"><path d="M1 0.5L8 7.5M8 0.5L1 7.5" stroke="#000" stroke-width="1.6"/></svg></div>
<div class="a" style="left:0;top:428px;font:11px 'Liberation Sans',sans-serif;line-height:14px;color:#7c7c7c;white-space:nowrap">
<span class="a" style="left:822px">Clear</span><span class="a" style="left:859px">Hide</span><span class="a" style="left:892px">Save</span><span class="a" style="left:928px">Options</span><span class="a" style="left:977px">Help</span></div>
<div class="a" style="left:820px;top:446px;width:601px;height:346px;background:#000;border-top:1px solid #808080;border-left:1px solid #808080;border-right:1px solid #fff;border-bottom:1px solid #fff;box-shadow:inset 1px 1px 0 #404040,inset -1px -1px 0 #d4d0c8"></div>
<div class="a mono" style="left:824px;top:450px;line-height:14px;color:#e4e4e4;white-space:pre">!1421.00N/10156.00E#DiGi@APRS THAILAND GROUP E22IDC@Gmail.com:dev 4.9KHz
10:37:37R E22IDC-2&gt;APOT21,WIDE1-1 &lt;UI Len=72&gt;:
!1421.00N/10156.00E#DiGi@APRS THAILAND GROUP E22IDC@Gmail.com:dev 4.9KHz
10:45:02R HS3KYS-9&gt;APGJW6-1,WIDE1-1,WIDE2-1 &lt;UI C Len=47&gt;:
!1443.58N\10201.39EP135/000/A=000660:dev 4.9KHz
10:48:54R HS3KYS-9&gt;APGJW6-1 &lt;UI C Len=24&gt;:
&gt;{EZTRAK}2.1B:dev 4.9KHz
11:05:04R HS3KYS-9&gt;APGJW6-1,WIDE1-1 &lt;UI C Len=47&gt;:
!1443.58N\10201.39EP050/000/A=000656:dev 4.9KHz
11:18:57R HS3KYS-9&gt;APGJW6-1,WIDE1-1,WIDE2-1 &lt;UI C Len=24&gt;:
&gt;{EZTRAK}2.1B:dev 4.9KHz
11:25:06R HS3KYS-9&gt;APGJW6-1 &lt;UI C Len=47&gt;:
!1443.58N\10201.39EP108/000/A=000650:dev 4.9KHz
11:45:07R HS3KYS-9&gt;APGJW6-1,WIDE1-1 &lt;UI C Len=47&gt;:
!1443.59N\10201.39EP066/000/A=000636:dev 4.9KHz
11:46:18R HS3KYS-9&gt;APGJW6-1,WIDE1-1,WIDE2-1 &lt;UI C Len=66&gt;:
!1443.59N\10201.39EP294/000/A=000640BT-50 White Parking:dev 4.9KHz
11:46:32R HS3KYS-9&gt;APGJW6-1 &lt;UI C Len=47&gt;:
!1443.59N\10201.39EP247/000/A=000643:dev 4.9KHz
11:46:39R HS3KYS-9&gt;APGJW6-1,WIDE1-1 &lt;UI C Len=47&gt;:
!1443.59N\10201.39EP247/000/A=000636:dev 4.9KHz
11:49:06R HS3KYS-9&gt;APGJW6-1,WIDE1-1,WIDE2-1 &lt;UI C Len=24&gt;:
&gt;{EZTRAK}2.1B:dev 4.9KHz</div>
<div class="a" style="left:1403px;top:448px;width:16px;height:342px;background:repeating-conic-gradient(#fff 0 25%,#d4d0c8 0 50%) 0 0/2px 2px"></div>
<div class="btn" style="left:1403px;top:448px;width:16px;height:16px"><svg class="a" style="left:3px;top:4px" width="8" height="5"><path d="M0 4.5L4 0.5L8 4.5Z" fill="#000"/></svg></div>
<div class="btn" style="left:1403px;top:712px;width:16px;height:63px"></div>
<div class="btn" style="left:1403px;top:774px;width:16px;height:16px"><svg class="a" style="left:3px;top:5px" width="8" height="5"><path d="M0 0.5L4 4.5L8 0.5Z" fill="#000"/></svg></div>


<!-- Status bar -->
<div class="a" style="left:3px;top:811px;width:76px;height:33px;border-top:1px solid #404040;border-left:1px solid #404040;border-right:1px solid #fff;border-bottom:1px solid #fff;box-shadow:inset 1px 1px 0 #808080"></div>
<div class="a" style="left:3px;top:820px;width:76px;text-align:center;font:bold 12px 'Liberation Sans',sans-serif;line-height:14px">OK04WW</div>
<div class="a" style="left:83px;top:811px;width:1269px;height:33px;background:#fff;border-top:1px solid #808080;border-left:1px solid #808080;border-right:1px solid #fff;border-bottom:1px solid #fff;box-shadow:inset 1px 1px 0 #404040"></div>
<div class="a" style="left:86px;top:813px;font-size:10.6px;line-height:13px;white-space:pre">HS3TJB-1&gt;APRX21,TCPIP*,qAC,T2FINLAND:
!1458.10NR10206.75E&amp;Rx-only iGate--&gt;IAM-AIM Moo Yang @ KoRat</div>
<div class="btn" style="left:1335px;top:812px;width:16px;height:15px"><svg class="a" style="left:4px;top:5px" width="7" height="4"><path d="M0 4L3.5 0.5L7 4Z" fill="#000"/></svg></div>
<div class="btn" style="left:1335px;top:827px;width:16px;height:15px"><svg class="a" style="left:4px;top:5px" width="7" height="4"><path d="M0 0L3.5 3.5L7 0Z" fill="#000"/></svg></div>
<div class="a" style="left:1357px;top:811px;width:77px;height:35px;border-top:1px solid #404040;border-left:1px solid #404040;border-right:1px solid #fff;box-shadow:inset 1px 1px 0 #808080"></div>
<div class="a" style="left:1363px;top:813px;font:bold 12.5px 'Liberation Sans',sans-serif;line-height:15px;white-space:pre">14.55.64N
101.53.99E</div>

</body></html>
